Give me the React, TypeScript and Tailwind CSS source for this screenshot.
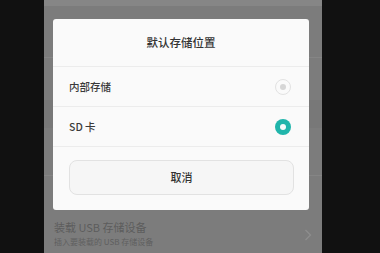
const cjk = { fontFamily: '"Noto Sans CJK SC", "Noto Sans", sans-serif' }

function Radio({ checked }: { checked: boolean }) {
  if (checked) {
    return (
      <span className="flex h-[16px] w-[16px] items-center justify-center rounded-full bg-[#20b5ab]">
        <span className="h-[6px] w-[6px] rounded-full bg-[#f4fbfa]" />
      </span>
    )
  }
  return (
    <span className="flex h-[16px] w-[16px] items-center justify-center rounded-full border-[1.5px] border-[#e2e2e2]">
      <span className="h-[6px] w-[6px] rounded-full bg-[#d6d6d6]" />
    </span>
  )
}

export default function App() {
  return (
    <div className="flex h-[253px] w-[380px] overflow-hidden bg-[#111111]" style={cjk}>
      <div className="w-[44px] shrink-0 bg-[#111111]" />

      <div className="relative flex w-[278px] shrink-0 flex-col bg-[#7c7c7c]">
        {/* faint list rows behind the dim */}
        <div className="absolute inset-x-0 top-0 h-[6px] bg-[#868686]" />
        <div className="absolute inset-x-0 top-[57px] h-px bg-[#858585]" />
        <div className="absolute inset-x-0 top-[100px] h-[28px] bg-[#787878]" />
        <div className="absolute inset-x-0 top-[175px] h-px bg-[#858585]" />

        <div className="relative ml-[9px] mt-[19px] flex h-[191px] w-[256px] flex-col rounded-[3px] bg-[#fafafa]">
          <div className="flex h-[48px] items-center justify-center border-b border-[#ececec] text-[11.5px] font-medium text-[#333]">
            默认存储位置
          </div>
          <div className="flex h-[40px] items-center justify-between border-b border-[#ececec] pl-[16px] pr-[18px] text-[10.5px] font-medium text-[#3a3a3a]">
            <span>内部存储</span>
            <Radio checked={false} />
          </div>
          <div className="flex h-[40px] items-center justify-between border-b border-[#ececec] pl-[16px] pr-[18px] text-[10.5px] font-medium text-[#3a3a3a]">
            <span>SD 卡</span>
            <Radio checked />
          </div>
          <div className="px-[15px] pt-[13px]">
            <div className="ml-px flex h-[35px] items-center justify-center rounded-[8px] border border-[#e2e2e2] bg-[#f6f6f6] text-[11px] font-medium text-[#333]">
              取消
            </div>
          </div>
        </div>

        <div className="relative flex items-center justify-between pl-[10px] pr-[10px] pt-[9px]">
          <div className="flex flex-col">
            <span className="text-[11px] leading-[16px] text-[#5c5c5c]">装载 USB 存储设备</span>
            <span className="text-[8px] leading-[14px] text-[#5f5f5f]">插入要装载的 USB 存储设备</span>
          </div>
          <svg width="8" height="12" viewBox="0 0 8 12" fill="none" className="mt-[2px]">
            <path d="M1.5 1 L6.5 6 L1.5 11" stroke="#8e8e8e" strokeWidth="1.3" />
          </svg>
        </div>
      </div>

      <div className="flex-1 bg-[#111111]" />
    </div>
  )
}
